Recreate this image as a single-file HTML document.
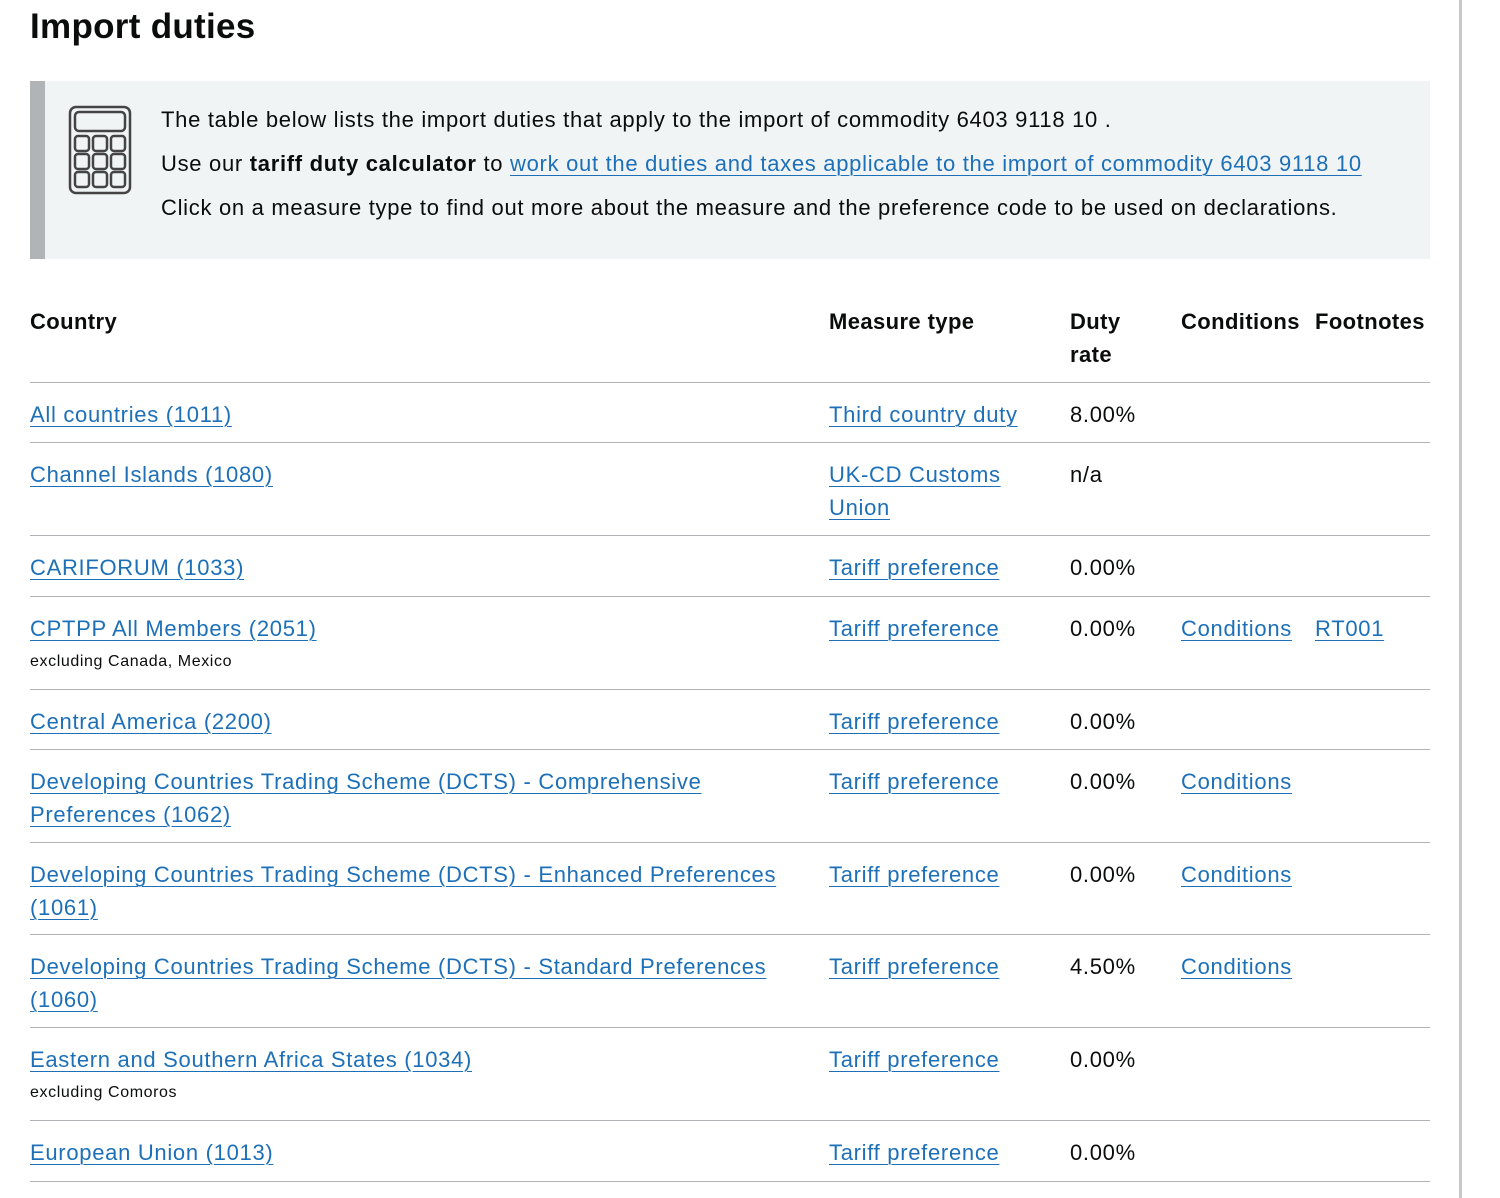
<!DOCTYPE html>
<html><head><meta charset="utf-8"><style>
body{margin:0;width:1500px;height:1198px;background:#fff;font-family:"Liberation Sans",sans-serif;color:#0b0c0c;position:relative;overflow:hidden}
.vl{position:absolute;left:1459px;top:0;width:3px;height:1198px;background:#c8c8c8}
h1{position:absolute;left:30px;top:4px;margin:0;font-size:35px;font-weight:bold;line-height:46px;letter-spacing:0.3px}
.panel{position:absolute;left:30px;top:81px;width:1400px;height:178px;background:#f0f4f5}
.panel .bar{position:absolute;left:0;top:0;width:15px;height:178px;background:#b1b4b6}
.panel .txt{position:absolute;left:131px;top:17px;font-size:22px;line-height:44px;letter-spacing:0.7px;white-space:nowrap}
a{color:#1d70b8;text-decoration:underline;text-underline-offset:4px;text-decoration-thickness:1px}
.row{position:absolute;left:30px;width:1400px;border-bottom:1px solid #b1b4b6;font-size:22px;line-height:33px;letter-spacing:0.7px}
.row div{position:absolute;top:15px;white-space:nowrap}
.c1{left:0;width:760px}.c2{left:799px;width:190px}.c3{left:1040px}.c4{left:1151px}.c5{left:1285px}
.hd div{font-weight:bold;letter-spacing:0.4px}
small{display:block;font-size:16px;line-height:22px;margin-top:6px;color:#0b0c0c;letter-spacing:0.6px}
</style></head><body>
<div class="vl"></div>
<h1>Import duties</h1>
<div class="panel"><div class="bar"></div>
<svg style="position:absolute;left:38px;top:24px" width="64" height="90" viewBox="0 0 64 90" fill="none" stroke="#444" stroke-width="2.5">
<rect x="2" y="2" width="60" height="86" rx="6"/>
<rect x="7" y="7" width="50" height="19" rx="4"/>
<rect x="7" y="31" width="14" height="15" rx="3"/><rect x="25" y="31" width="14" height="15" rx="3"/><rect x="43" y="31" width="14" height="15" rx="3"/>
<rect x="7" y="49" width="14" height="15" rx="3"/><rect x="25" y="49" width="14" height="15" rx="3"/><rect x="43" y="49" width="14" height="15" rx="3"/>
<rect x="7" y="67" width="14" height="15" rx="3"/><rect x="25" y="67" width="14" height="15" rx="3"/><rect x="43" y="67" width="14" height="15" rx="3"/>
</svg>
<div class="txt">The table below lists the import duties that apply to the import of commodity 6403 9118 10 .<br>Use our <b>tariff duty calculator</b> to <a>work out the duties and taxes applicable to the import of commodity 6403 9118 10</a><br>Click on a measure type to find out more about the measure and the preference code to be used on declarations.</div>
</div>

<div class="row hd" style="top:290px;height:92px"><div class="c1">Country</div><div class="c2">Measure type</div><div class="c3">Duty<br>rate</div><div class="c4">Conditions</div><div class="c5">Footnotes</div></div>
<div class="row" style="top:383px;height:59px"><div class="c1"><a>All countries (1011)</a></div><div class="c2"><a>Third country duty</a></div><div class="c3">8.00%</div></div>
<div class="row" style="top:443px;height:92px"><div class="c1"><a>Channel Islands (1080)</a></div><div class="c2"><a>UK-CD Customs<br>Union</a></div><div class="c3">n/a</div></div>
<div class="row" style="top:536px;height:60px"><div class="c1"><a>CARIFORUM (1033)</a></div><div class="c2"><a>Tariff preference</a></div><div class="c3">0.00%</div></div>
<div class="row" style="top:597px;height:92px"><div class="c1"><a>CPTPP All Members (2051)</a><small>excluding Canada, Mexico</small></div><div class="c2"><a>Tariff preference</a></div><div class="c3">0.00%</div><div class="c4"><a>Conditions</a></div><div class="c5"><a>RT001</a></div></div>
<div class="row" style="top:690px;height:59px"><div class="c1"><a>Central America (2200)</a></div><div class="c2"><a>Tariff preference</a></div><div class="c3">0.00%</div></div>
<div class="row" style="top:750px;height:92px"><div class="c1"><a>Developing Countries Trading Scheme (DCTS) - Comprehensive<br>Preferences (1062)</a></div><div class="c2"><a>Tariff preference</a></div><div class="c3">0.00%</div><div class="c4"><a>Conditions</a></div></div>
<div class="row" style="top:843px;height:91px"><div class="c1"><a>Developing Countries Trading Scheme (DCTS) - Enhanced Preferences<br>(1061)</a></div><div class="c2"><a>Tariff preference</a></div><div class="c3">0.00%</div><div class="c4"><a>Conditions</a></div></div>
<div class="row" style="top:935px;height:92px"><div class="c1"><a>Developing Countries Trading Scheme (DCTS) - Standard Preferences<br>(1060)</a></div><div class="c2"><a>Tariff preference</a></div><div class="c3">4.50%</div><div class="c4"><a>Conditions</a></div></div>
<div class="row" style="top:1028px;height:92px"><div class="c1"><a>Eastern and Southern Africa States (1034)</a><small>excluding Comoros</small></div><div class="c2"><a>Tariff preference</a></div><div class="c3">0.00%</div></div>
<div class="row" style="top:1121px;height:60px"><div class="c1"><a>European Union (1013)</a></div><div class="c2"><a>Tariff preference</a></div><div class="c3">0.00%</div></div>
</body></html>
